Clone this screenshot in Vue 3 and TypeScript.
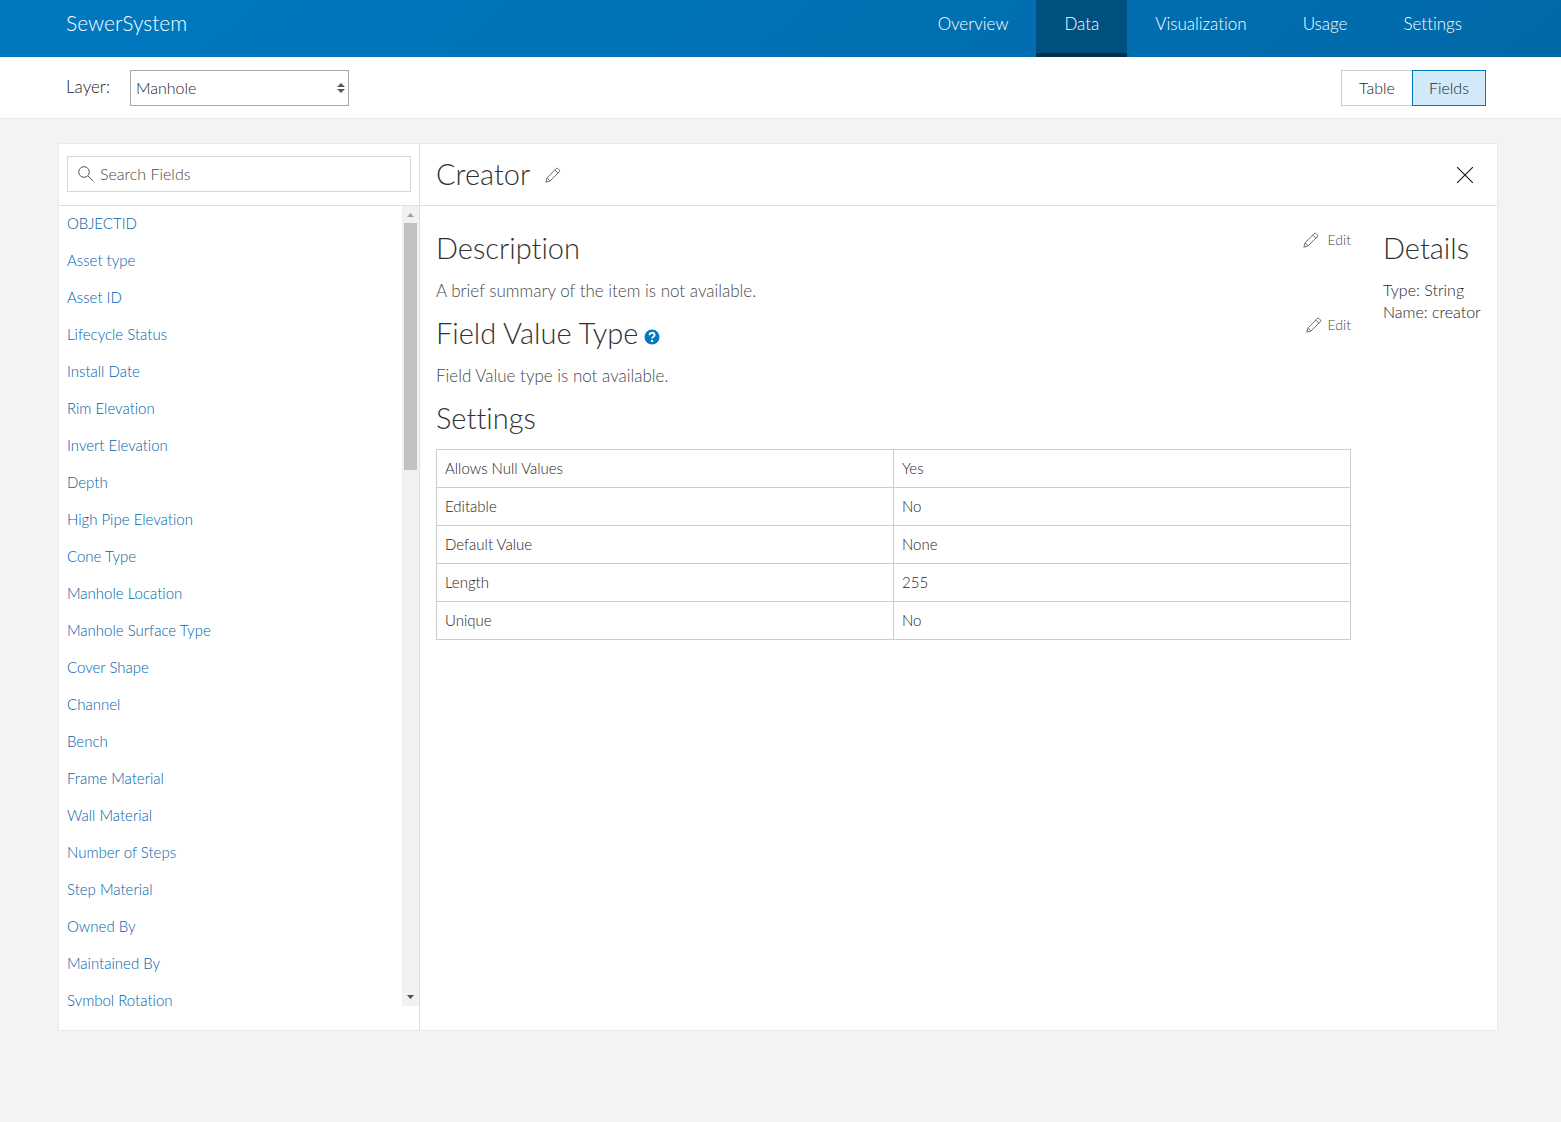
<script setup lang="ts">
import { ref } from 'vue'

const tabs = ['Overview', 'Data', 'Visualization', 'Usage', 'Settings']
const activeTab = ref('Data')
const layer = ref('Manhole')
const view = ref('Fields')
const search = ref('')

const fields = [
  'OBJECTID', 'Asset type', 'Asset ID', 'Lifecycle Status', 'Install Date',
  'Rim Elevation', 'Invert Elevation', 'Depth', 'High Pipe Elevation', 'Cone Type',
  'Manhole Location', 'Manhole Surface Type', 'Cover Shape', 'Channel', 'Bench',
  'Frame Material', 'Wall Material', 'Number of Steps', 'Step Material', 'Owned By',
  'Maintained By', 'Symbol Rotation',
]

const settings = [
  { label: 'Allows Null Values', value: 'Yes' },
  { label: 'Editable', value: 'No' },
  { label: 'Default Value', value: 'None' },
  { label: 'Length', value: '255' },
  { label: 'Unique', value: 'No' },
]

const pencil = 'M.8 15.200l1.300-4.300 8.900-9.200a1.500 1.500 0 0 1 2.200 0l1 1a1.500 1.500 0 0 1 0 2.200L5.100 13.900zM9.800 3l3.100 3.100M2.100 10.900l3 3'
</script>

<template>
  <div class="page">
    <header class="top">
      <h1 class="title">SewerSystem</h1>
      <nav class="tabs">
        <a v-for="t in tabs" :key="t" href="#" class="tab" :class="{ active: t === activeTab }" @click.prevent="activeTab = t">{{ t }}</a>
      </nav>
    </header>

    <div class="toolbar">
      <label for="layer" class="layer-label">Layer:</label>
      <div class="select-wrap">
        <select id="layer" v-model="layer" class="select">
          <option>Manhole</option>
        </select>
        <svg class="arrows" width="8" height="10" viewBox="0 0 8 10" aria-hidden="true">
          <path d="M4 0l4 4H0zM4 10l4-4H0z" fill="#595959" />
        </svg>
      </div>
      <div class="toggle">
        <button v-for="v in ['Table', 'Fields']" :key="v" type="button" class="toggle-btn" :class="{ on: v === view }" @click="view = v">{{ v }}</button>
      </div>
    </div>

    <main class="panel">
      <aside class="side">
        <div class="search-bar">
          <div class="search-box">
            <svg width="16" height="16" viewBox="0 0 16 16" fill="none" stroke="#595959" aria-hidden="true">
              <circle cx="6" cy="6" r="5.3" />
              <path d="M9.8 9.8l5.700 5.700" />
            </svg>
            <input v-model="search" class="search" type="text" placeholder="Search Fields" aria-label="Search Fields" />
          </div>
        </div>
        <div class="list-area">
          <ul class="list">
            <li v-for="f in fields" :key="f"><a href="#" class="field" @click.prevent>{{ f }}</a></li>
          </ul>
          <div class="scrollbar" aria-hidden="true">
            <svg width="17" height="17" viewBox="0 0 17 17"><path d="M5 11h7L8.500 7z" fill="#a3a3a3" /></svg>
            <div class="thumb"></div>
            <svg width="17" height="17" viewBox="0 0 17 17"><path d="M5 6h7l-3.500 4z" fill="#505050" /></svg>
          </div>
        </div>
      </aside>

      <section class="detail">
        <div class="detail-head">
          <h2 class="heading">Creator</h2>
          <button type="button" class="icon-btn" aria-label="Edit name">
            <svg class="pencil" width="16" height="16" viewBox="0 0 16 16"><path :d="pencil" /></svg>
          </button>
          <button type="button" class="icon-btn close" aria-label="Close">
            <svg width="16" height="16" viewBox="0 0 16 16" stroke="#151515" stroke-width="1.1"><path d="M0 0l16 16M16 0L0 16" /></svg>
          </button>
        </div>
        <div class="detail-body">
          <div class="content">
            <div class="row">
              <h3 class="heading">Description</h3>
              <button type="button" class="edit wide">
                <svg class="pencil" width="16" height="16" viewBox="0 0 16 16"><path :d="pencil" /></svg>Edit
              </button>
            </div>
            <p class="note">A brief summary of the item is not available.</p>
            <div class="row">
              <h3 class="heading">Field Value Type</h3>
              <button type="button" class="icon-btn help" aria-label="Help">
                <svg width="16" height="16" viewBox="0 0 16 16">
                  <circle cx="8" cy="8" r="7.500" fill="#0079c1" />
                  <path d="M5.500 6.200C5.500 3 10.600 3 10.600 6c0 1.900-2.500 1.800-2.500 3.500" fill="none" stroke="#fff" stroke-width="1.800" />
                  <circle cx="8.100" cy="11.900" r="1.200" fill="#fff" />
                </svg>
              </button>
              <button type="button" class="edit">
                <svg class="pencil" width="16" height="16" viewBox="0 0 16 16"><path :d="pencil" /></svg>Edit
              </button>
            </div>
            <p class="note">Field Value type is not available.</p>
            <h3 class="heading">Settings</h3>
            <table class="settings">
              <tbody>
                <tr v-for="s in settings" :key="s.label">
                  <th scope="row">{{ s.label }}</th>
                  <td>{{ s.value }}</td>
                </tr>
              </tbody>
            </table>
          </div>
          <div class="details">
            <h3 class="heading">Details</h3>
            <div class="facts">
              <div>Type: String</div>
              <div>Name: creator</div>
            </div>
          </div>
        </div>
      </section>
    </main>
  </div>
</template>

<style>
body {
  background: #f3f3f3;
}
</style>

<style scoped>
* {
  box-sizing: border-box;
}
.page {
  font-family: Lato, 'Open Sans', sans-serif;
  font-size: 16px;
  font-weight: 300;
  font-variant-ligatures: none;
  line-height: 24px;
  color: #242424;
}
button,
input,
select {
  font: inherit;
  font-variant-ligatures: none;
  color: inherit;
  margin: 0;
}
h1, h2, h3, p, ul {
  margin: 0;
  padding: 0;
  font-weight: inherit;
}
a {
  text-decoration: none;
}
svg {
  display: block;
  flex: none;
}
.top {
  display: flex;
  justify-content: space-between;
  height: 57px;
  padding: 0 71px 0 66px;
  background: linear-gradient(139deg, #0079c1, #0069a8);
  color: #fff;
}
.title {
  font-size: 21px;
  line-height: 46px;
}
.tabs {
  display: flex;
}
.tab {
  padding: 0 28px;
  font-size: 17px;
  line-height: 48px;
  color: #fff;
}
.tab.active {
  background: #005080;
  border-bottom: 4px solid #00304d;
}
.toolbar {
  display: flex;
  align-items: center;
  padding: 13px 75px 12px 66px;
  background: #fff;
  border-bottom: 1px solid #eaeaea;
}
.layer-label {
  width: 64px;
  padding-bottom: 2px;
  font-size: 17px;
}
.select-wrap {
  position: relative;
  width: 219px;
}
.select {
  display: block;
  appearance: none;
  width: 100%;
  height: 36px;
  padding: 0 5px 1px;
  background: #fff;
  border: 1px solid #a9a9a9;
  border-radius: 0;
}
.arrows {
  position: absolute;
  right: 4px;
  top: 13px;
  pointer-events: none;
}
.toggle {
  display: flex;
  margin-left: auto;
}
.toggle-btn {
  min-width: 72px;
  height: 36px;
  padding: 0 16px 1px;
  background: #fff;
  border: 1px solid #ccc;
}
.toggle-btn + .toggle-btn {
  margin-left: -1px;
}
.toggle-btn.on {
  background: #d2e9f9;
  border-color: #0079c1;
}
.panel {
  display: flex;
  margin: 24px 63px 91px 58px;
  background: #fff;
  border: 1px solid #eaeaea;
}
.side {
  flex: none;
  width: 361px;
  padding-bottom: 24px;
  border-right: 1px solid #e0e0e0;
}
.search-bar {
  height: 62px;
  padding: 12px 8px 0;
  border-bottom: 1px solid #e0e0e0;
}
.search-box {
  display: flex;
  align-items: center;
  gap: 6px;
  height: 36px;
  padding: 0 10px;
  border: 1px solid #d8d8d8;
}
.search {
  flex: 1;
  min-width: 0;
  height: 32px;
  padding: 0 0 2px;
  border: 0;
  outline: 0;
  background: none;
}
.search::placeholder {
  color: #484848;
}
.list-area {
  display: flex;
  height: 800px;
}
.list {
  flex: 1;
  overflow-y: auto;
  scrollbar-width: none;
  list-style: none;
}
.field {
  display: block;
  padding: 0 8px 2px;
  font-size: 15px;
  line-height: 35px;
  color: #0062ac;
}
.scrollbar {
  display: flex;
  flex-direction: column;
  width: 17px;
  background: #f1f1f1;
}
.thumb {
  width: 13px;
  height: 247px;
  margin: 0 2px auto;
  background: #c1c1c1;
}
.detail {
  flex: 1;
  min-width: 0;
}
.detail-head {
  display: flex;
  align-items: center;
  height: 62px;
  padding: 0 24px 0 16px;
  border-bottom: 1px solid #e0e0e0;
}
.heading {
  padding-bottom: 2px;
  font-size: 29px;
  line-height: 34px;
  color: #323232;
}
.icon-btn {
  padding: 0;
  margin-left: 15px;
  border: 0;
  background: none;
}
.icon-btn.close {
  margin-left: auto;
}
.icon-btn.help {
  margin: 6px 0 0 6px;
}
.pencil {
  fill: none;
  stroke: #6e6e6e;
}
.detail-body {
  display: flex;
  gap: 32px;
  padding: 25px 16px 24px;
}
.content {
  flex: 1;
  min-width: 0;
}
.row {
  display: flex;
  align-items: center;
}
.edit {
  display: flex;
  align-items: center;
  align-self: flex-start;
  gap: 6px;
  margin-left: auto;
  padding: 0;
  border: 0;
  background: none;
  font-size: 14px;
  line-height: 18px;
  color: #484848;
}
.edit.wide {
  gap: 9px;
}
.note {
  margin: 12px 0 13px;
  font-size: 17px;
  color: #484848;
}
.settings {
  width: 100%;
  margin-top: 12px;
  border-collapse: collapse;
  table-layout: fixed;
  font-size: 15px;
}
.settings th,
.settings td {
  height: 38px;
  padding: 0 8px 2px;
  border: 1px solid #ccc;
  font-weight: inherit;
  text-align: left;
}
.details {
  flex: none;
  width: 98px;
  white-space: nowrap;
}
.facts {
  margin-top: 12px;
  font-size: 16px;
  line-height: 22px;
}
</style>
